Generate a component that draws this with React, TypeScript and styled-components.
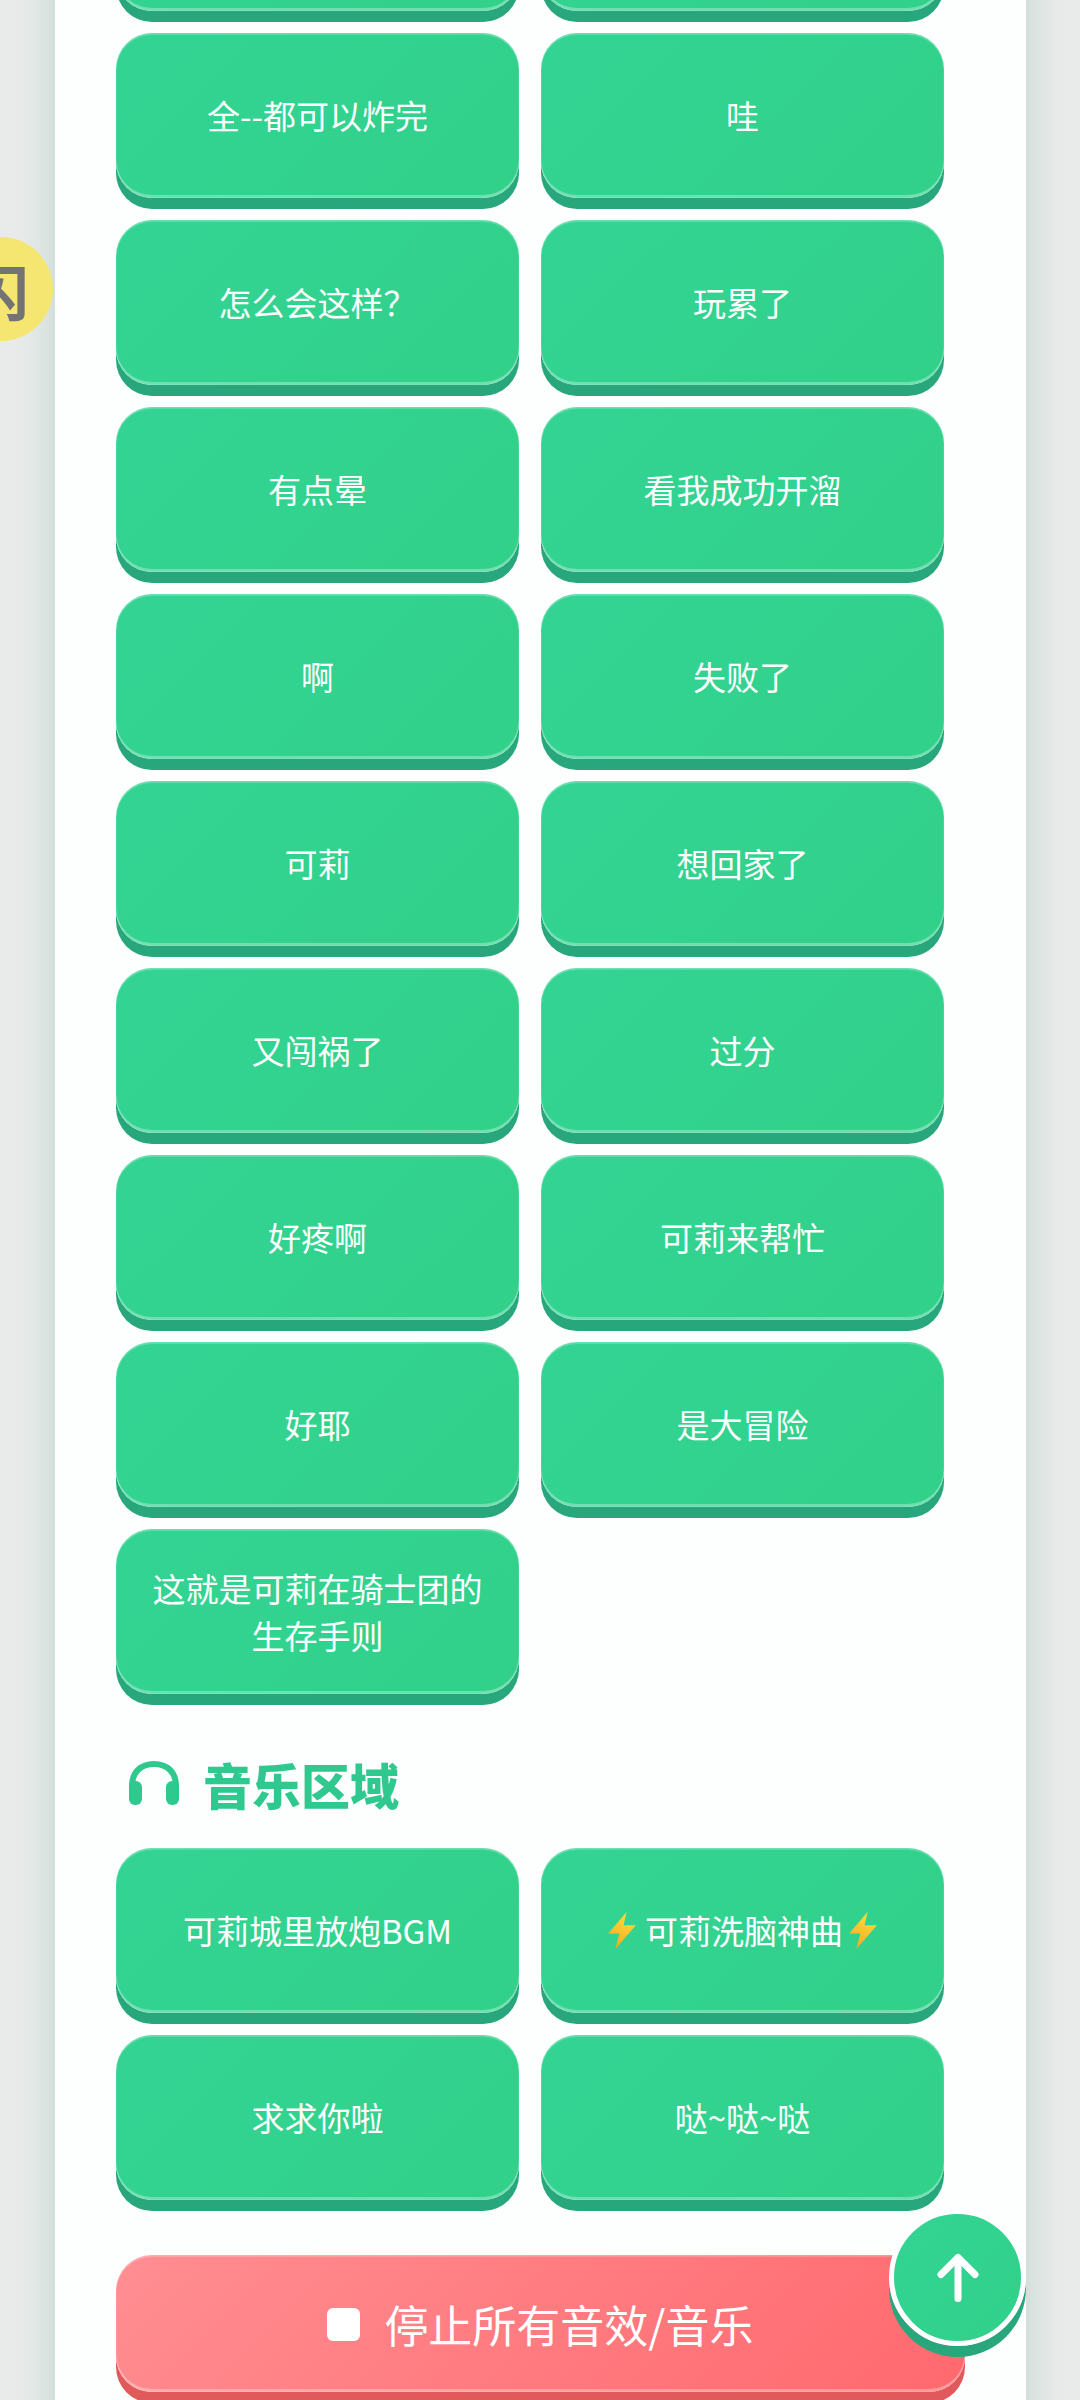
import styled, { createGlobalStyle } from "styled-components";

const GlobalStyle = createGlobalStyle`
  html, body {
    margin: 0;
    padding: 0;
    background: #e8ebea;
    font-family: "Noto Sans CJK SC", "Noto Sans", sans-serif;
  }
`;

const Page = styled.div`
  width: 1080px;
  height: 2400px;
  overflow: hidden;
  position: relative;
`;

const Panel = styled.main`
  width: 971px;
  margin: -154px 0 0 55px;
  padding: 0 61px 120px;
  box-sizing: border-box;
  background: #fdfefe;
  box-shadow: 0 0 36px rgba(30, 120, 90, 0.2);
`;

const SoundGrid = styled.div`
  display: grid;
  grid-template-columns: 403px 403px;
  gap: 22px;
`;

const SoundButton = styled.button`
  height: 165px;
  padding: 0 24px;
  border: none;
  border-radius: 36px;
  color: #fff;
  font-family: inherit;
  font-size: 33px;
  line-height: 47px;
  background: linear-gradient(135deg, #33d394, #31d18a);
  box-shadow: 0 11px 0 #27a77b, inset 0 2px 0 rgba(255, 255, 255, 0.2),
    inset 0 -3px 0 rgba(255, 255, 255, 0.3), inset 0 0 0 1px rgba(255, 255, 255, 0.1);
  display: flex;
  align-items: center;
  justify-content: center;
`;

const Label = styled.span`
  margin: 0 6px 0 9px;
`;

const SectionTitle = styled.h2`
  display: flex;
  align-items: center;
  gap: 24px;
  height: 154px;
  margin: 0;
  padding: 24px 0 0 13px;
  box-sizing: border-box;
  color: #2fc98f;
  font-size: 49px;
  font-weight: 900;
  line-height: 1;
`;

const StopButton = styled.button`
  width: 849px;
  height: 137px;
  margin-top: 55px;
  padding: 1px 0 0;
  border: none;
  border-radius: 36px;
  color: #fff;
  font-family: inherit;
  font-size: 44px;
  line-height: 1;
  background: linear-gradient(135deg, #ff8e92, #ff696e);
  box-shadow: 0 11px 0 #e05a5c, inset 0 2px 0 rgba(255, 255, 255, 0.2),
    inset 0 -3px 0 rgba(255, 255, 255, 0.3), inset 0 0 0 1px rgba(255, 255, 255, 0.1);
  display: flex;
  align-items: center;
  justify-content: center;
  gap: 24px;
`;

const StopIcon = styled.span`
  width: 33px;
  height: 33px;
  border-radius: 6px;
  background: #fff;
`;

const SideBadge = styled.div`
  position: absolute;
  left: -51px;
  top: 237px;
  width: 104px;
  height: 104px;
  padding-right: 4px;
  box-sizing: border-box;
  border-radius: 50%;
  background: #f5e671;
  color: #737373;
  font-size: 60px;
  font-weight: 700;
  display: flex;
  align-items: center;
  justify-content: center;
`;

const TopButton = styled.button`
  position: absolute;
  left: 889px;
  top: 2209px;
  width: 137px;
  height: 137px;
  padding: 0;
  box-sizing: border-box;
  border: 5px solid #fff;
  border-radius: 50%;
  background: linear-gradient(135deg, #33d394, #31d18a);
  box-shadow: 0 11px 0 #27a77b;
  display: flex;
  align-items: center;
  justify-content: center;
`;

const soundRows = [
  "",
  "",
  "全--都可以炸完",
  "哇",
  "怎么会这样？",
  "玩累了",
  "有点晕",
  "看我成功开溜",
  "啊",
  "失败了",
  "可莉",
  "想回家了",
  "又闯祸了",
  "过分",
  "好疼啊",
  "可莉来帮忙",
  "好耶",
  "是大冒险",
  "这就是可莉在骑士团的生存手则",
];

const Bolt = () => (
  <svg width="28" height="37" viewBox="0 0 27 36" aria-hidden="true">
    <defs>
      <linearGradient id="bolt" x1="0.7" y1="0" x2="0.3" y2="1">
        <stop offset="0" stopColor="#ffdf3d" />
        <stop offset="1" stopColor="#f6a821" />
      </linearGradient>
    </defs>
    <path d="M18 0 L0 21 L11 21 L7 36 L27 13 L15 13 Z" fill="url(#bolt)" />
  </svg>
);

const HeadphonesIcon = () => (
  <svg width="50" height="44" viewBox="0 0 50 44" aria-hidden="true" fill="currentColor">
    <path d="M3 26 V25 C3 11 12 3 25 3 C38 3 47 11 47 25 V26" fill="none" stroke="currentColor" strokeWidth="6" />
    <rect x="0" y="20" width="13" height="24" rx="6" />
    <rect x="37" y="20" width="13" height="24" rx="6" />
  </svg>
);

const ArrowUp = () => (
  <svg width="48" height="54" viewBox="0 0 48 54" fill="none" stroke="#fff" strokeWidth="7" strokeLinecap="round" strokeLinejoin="round">
    <path d="M24 47.5 V6.5 M7 23.5 L24 6.5 L41 23.5" />
  </svg>
);

export default function App() {
  return (
    <Page>
      <GlobalStyle />
      <Panel>
        <SoundGrid>
          {soundRows.map((label, i) => (
            <SoundButton key={i}>{label}</SoundButton>
          ))}
        </SoundGrid>
        <SectionTitle>
          <HeadphonesIcon />
          音乐区域
        </SectionTitle>
        <SoundGrid>
          <SoundButton>可莉城里放炮BGM</SoundButton>
          <SoundButton>
            <Bolt />
            <Label>可莉洗脑神曲</Label>
            <Bolt />
          </SoundButton>
          <SoundButton>求求你啦</SoundButton>
          <SoundButton>哒~哒~哒</SoundButton>
        </SoundGrid>
        <StopButton>
          <StopIcon />
          停止所有音效/音乐
        </StopButton>
      </Panel>
      <SideBadge>闪</SideBadge>
      <TopButton>
        <ArrowUp />
      </TopButton>
    </Page>
  );
}
